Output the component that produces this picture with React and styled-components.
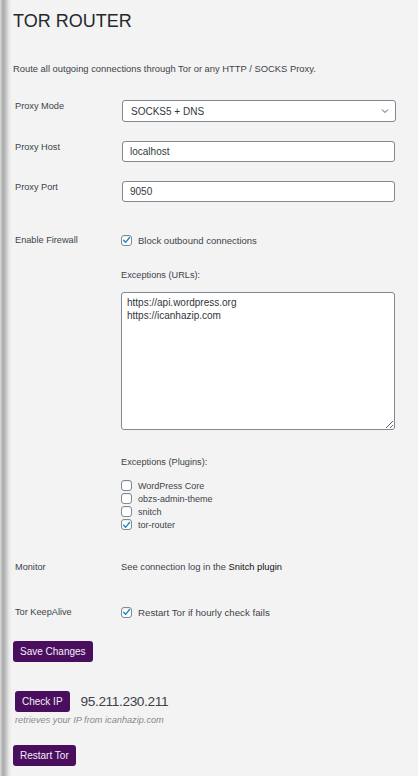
import React from "react";
import styled, { createGlobalStyle } from "styled-components";

const Global = createGlobalStyle`
  html, body { margin: 0; padding: 0; }
  body {
    background: #f3f3f3;
    font-family: "Liberation Sans", Arial, sans-serif;
    -webkit-font-smoothing: antialiased;
  }
`;

const Page = styled.div`
  min-height: 776px;
  box-sizing: border-box;
  padding: 10px 23px 0 13px;
  background: linear-gradient(90deg, #dedede 0px, #a8a8a8 3px, #c4c4c4 6px, #e8e8e8 9px, #f3f3f3 12px) no-repeat;
  background-color: #f3f3f3;
`;

const Title = styled.h1`
  margin: 0;
  font-size: 18px;
  line-height: 22px;
  font-weight: 400;
  color: #23282d;
`;

const Description = styled.p`
  margin: 31px 0 0;
  font-size: 9.4px;
  line-height: 12px;
  color: #3c434a;
`;

const Form = styled.div`
  display: flex;
  flex-direction: column;
`;

const Row = styled.div`
  display: grid;
  grid-template-columns: 108px 1fr;
  margin-top: ${(p) => p.$gap}px;
`;

const Label = styled.div`
  padding-left: 2px;
  font-size: 9.2px;
  line-height: 12px;
  color: #3c434a;
`;

const Field = styled.div`
  display: flex;
  flex-direction: column;
  align-items: flex-start;
  min-width: 0;
`;

const SelectWrap = styled.div`
  position: relative;
  width: 100%;
  margin-left: 1px;
`;

const Select = styled.div`
  box-sizing: border-box;
  height: 22px;
  width: 100%;
  border: 1px solid #7e8993;
  border-radius: 3px;
  background: #fff;
  padding-left: 8px;
  display: flex;
  align-items: center;
  font-size: 10px;
  color: #32373c;
`;

const Chevron = styled.svg`
  position: absolute;
  right: 7px;
  top: 8px;
`;

const TextInput = styled.input`
  box-sizing: border-box;
  height: 21px;
  width: calc(100% - 1px);
  margin: 0 0 0 1px;
  border: 1px solid #7e8993;
  border-radius: 3px;
  background: #fff;
  padding: 0 7px;
  font-family: "Liberation Sans", Arial, sans-serif;
  font-size: 10px;
  color: #32373c;
  outline: none;
`;

const CheckLine = styled.label`
  display: flex;
  align-items: center;
  gap: 6px;
  height: ${(p) => p.$h || 12}px;
  font-size: ${(p) => p.$size || 9}px;
  color: #3c434a;
`;

const Box = styled.span`
  box-sizing: border-box;
  width: 11px;
  height: 11px;
  flex: none;
  border: 1px solid #7e8993;
  border-radius: 3px;
  background: #fff;
  box-shadow: inset 0 1px 1px rgba(0, 0, 0, 0.08);
  display: flex;
  align-items: center;
  justify-content: center;
`;

const SubHeading = styled.div`
  margin-top: ${(p) => p.$gap}px;
  font-size: 9.2px;
  line-height: 12px;
  color: #3c434a;
`;

const TextArea = styled.textarea`
  box-sizing: border-box;
  margin-top: 11px;
  width: 100%;
  height: 138px;
  border: 1px solid #7e8993;
  border-radius: 3px;
  background: #fff;
  padding: 3px 5px;
  font-family: "Liberation Sans", Arial, sans-serif;
  font-size: 10px;
  line-height: 13px;
  color: #32373c;
  outline: none;
`;

const PluginList = styled.div`
  margin-top: 11px;
  display: flex;
  flex-direction: column;
`;

const Plain = styled.div`
  font-size: 9.35px;
  line-height: 12px;
  color: #3c434a;
`;

const Strong = styled.span`
  color: #101214;
`;

const Button = styled.button`
  box-sizing: border-box;
  height: 21px;
  padding: 0 7px;
  margin: 0;
  border: none;
  border-radius: 3px;
  background: #4a0e5e;
  color: #f3eef5;
  font-family: "Liberation Sans", Arial, sans-serif;
  font-size: 10px;
  cursor: pointer;
`;

const ButtonRow = styled.div`
  display: flex;
  align-items: center;
  margin-top: ${(p) => p.$gap}px;
  margin-left: ${(p) => p.$indent || 0}px;
  gap: 11px;
`;

const Ip = styled.span`
  font-size: 13.7px;
  letter-spacing: -0.4px;
  color: #3c434a;
`;

const Hint = styled.div`
  margin: 2px 0 0 2px;
  font-size: 9.2px;
  line-height: 12px;
  font-style: italic;
  color: #8a8a8a;
`;

function Check({ checked }) {
  return (
    <Box>
      {checked && (
        <svg width="10" height="10" viewBox="0 0 10 10">
          <path d="M1.8 5.2 L4 7.6 L8.4 2.2" fill="none" stroke="#1e8cbe" strokeWidth="1.6" strokeLinecap="round" strokeLinejoin="round" />
        </svg>
      )}
    </Box>
  );
}

const plugins = [
  { name: "WordPress Core", checked: false },
  { name: "obzs-admin-theme", checked: false },
  { name: "snitch", checked: false },
  { name: "tor-router", checked: true },
];

export default function App() {
  return (
    <>
      <Global />
      <Page>
        <Title>TOR ROUTER</Title>
        <Description>Route all outgoing connections through Tor or any HTTP / SOCKS Proxy.</Description>
        <Form>
          <Row $gap={25}>
            <Label>Proxy Mode</Label>
            <Field>
              <SelectWrap>
                <Select>SOCKS5 + DNS</Select>
                <Chevron width="8" height="6" viewBox="0 0 8 6">
                  <path d="M1 1.5 L4 4.5 L7 1.5" fill="none" stroke="#50575e" strokeWidth="1" />
                </Chevron>
              </SelectWrap>
            </Field>
          </Row>
          <Row $gap={19}>
            <Label>Proxy Host</Label>
            <Field>
              <TextInput defaultValue="localhost" />
            </Field>
          </Row>
          <Row $gap={19}>
            <Label>Proxy Port</Label>
            <Field>
              <TextInput defaultValue="9050" />
            </Field>
          </Row>
          <Row $gap={32}>
            <Label>Enable Firewall</Label>
            <Field>
              <CheckLine $size={9.5}>
                <Check checked />
                Block outbound connections
              </CheckLine>
              <SubHeading $gap={23}>Exceptions (URLs):</SubHeading>
              <TextArea defaultValue={"https://api.wordpress.org\nhttps://icanhazip.com"} />
              <SubHeading $gap={26}>Exceptions (Plugins):</SubHeading>
              <PluginList>
                {plugins.map((p) => (
                  <CheckLine key={p.name} $h={13}>
                    <Check checked={p.checked} />
                    {p.name}
                  </CheckLine>
                ))}
              </PluginList>
            </Field>
          </Row>
          <Row $gap={30}>
            <Label>Monitor</Label>
            <Plain>
              See connection log in the <Strong>Snitch plugin</Strong>
            </Plain>
          </Row>
          <Row $gap={33}>
            <Label>Tor KeepAlive</Label>
            <Field>
              <CheckLine $size={9.7}>
                <Check checked />
                Restart Tor if hourly check fails
              </CheckLine>
            </Field>
          </Row>
        </Form>
        <ButtonRow $gap={23}>
          <Button>Save Changes</Button>
        </ButtonRow>
        <ButtonRow $gap={29} $indent={2}>
          <Button>Check IP</Button>
          <Ip>95.211.230.211</Ip>
        </ButtonRow>
        <Hint>retrieves your IP from icanhazip.com</Hint>
        <ButtonRow $gap={19}>
          <Button>Restart Tor</Button>
        </ButtonRow>
      </Page>
    </>
  );
}
